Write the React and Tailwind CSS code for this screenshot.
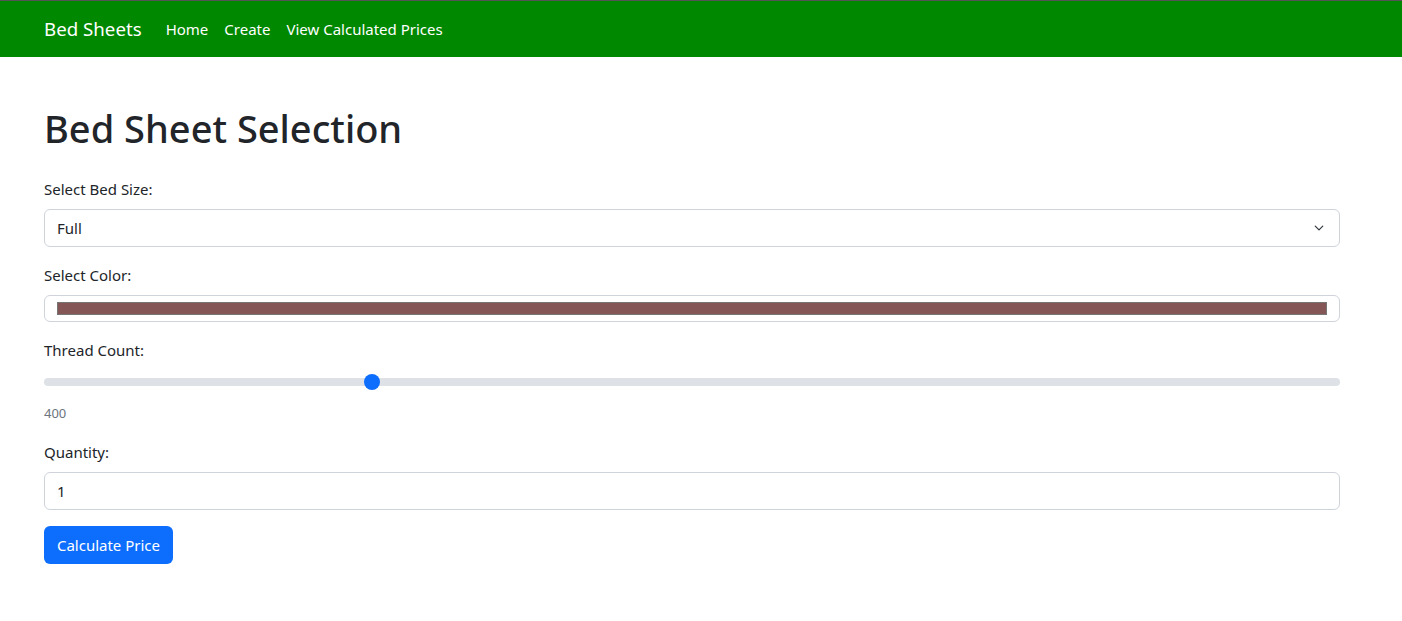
import React from "react";

const font = { fontFamily: '"Noto Sans", "Segoe UI", Roboto, sans-serif' };

export default function App() {
  const frac = 0.25;
  return (
    <div className="min-h-[621px] bg-white text-[#212529]" style={font}>
      <div className="h-px bg-[#555555]" />
      <nav className="h-[56px] bg-[#008800] flex items-center px-[44px]">
        <span className="text-[18.7px] text-white mr-4 leading-[30px]">Bed Sheets</span>
        <div className="flex">
          <a className="px-2 text-[15px] text-white">Home</a>
          <a className="px-2 text-[15px] text-white">Create</a>
          <a className="px-2 text-[15px] text-white">View Calculated Prices</a>
        </div>
      </nav>
      <div className="mx-[44px] w-[1296px] pt-[47px]">
        <h1 className="text-[38px] font-medium leading-[48px] mb-[25px]">Bed Sheet Selection</h1>
        <div className="mb-4">
          <label className="block text-[15px] leading-[24px] mb-[8px]">Select Bed Size:</label>
          <div className="relative h-[38px] border border-[#ced4da] rounded-[6px] flex items-center px-3">
            <span className="text-[15px]">Full</span>
            <svg className="absolute right-[13px] top-[13px]" width="14" height="10" viewBox="0 0 16 16">
              <path d="M2 5l6 6 6-6" fill="none" stroke="#343a40" strokeWidth="2" strokeLinecap="round" strokeLinejoin="round" />
            </svg>
          </div>
        </div>
        <div className="mb-4">
          <label className="block text-[15px] leading-[24px] mb-[8px]">Select Color:</label>
          <div className="h-[27px] border border-[#ced4da] rounded-[6px] flex items-center px-3">
            <div className="h-[13px] w-full bg-[#845656] border border-[#767676]" />
          </div>
        </div>
        <div className="mb-4">
          <label className="block text-[15px] leading-[24px] mb-[1px]">Thread Count:</label>
          <div className="relative h-[38px] flex items-center">
            <div className="w-full h-[8px] rounded-full bg-[#dee2e6]" />
            <div
              className="absolute top-[11px] w-[16px] h-[16px] rounded-full bg-[#0d6efd]"
              style={{ left: `${frac * (1296 - 16)}px` }}
            />
          </div>
          <div className="text-[13px] text-[#6c757d] leading-[22px] mt-[1px]">400</div>
        </div>
        <div className="mb-4">
          <label className="block text-[15px] leading-[24px] mb-[8px]">Quantity:</label>
          <div className="h-[38px] border border-[#ced4da] rounded-[6px] flex items-center px-3">
            <span className="text-[15px]">1</span>
          </div>
        </div>
        <button className="h-[38px] w-[129px] bg-[#0d6efd] text-white text-[15px] rounded-[6px]">Calculate Price</button>
      </div>
    </div>
  );
}
